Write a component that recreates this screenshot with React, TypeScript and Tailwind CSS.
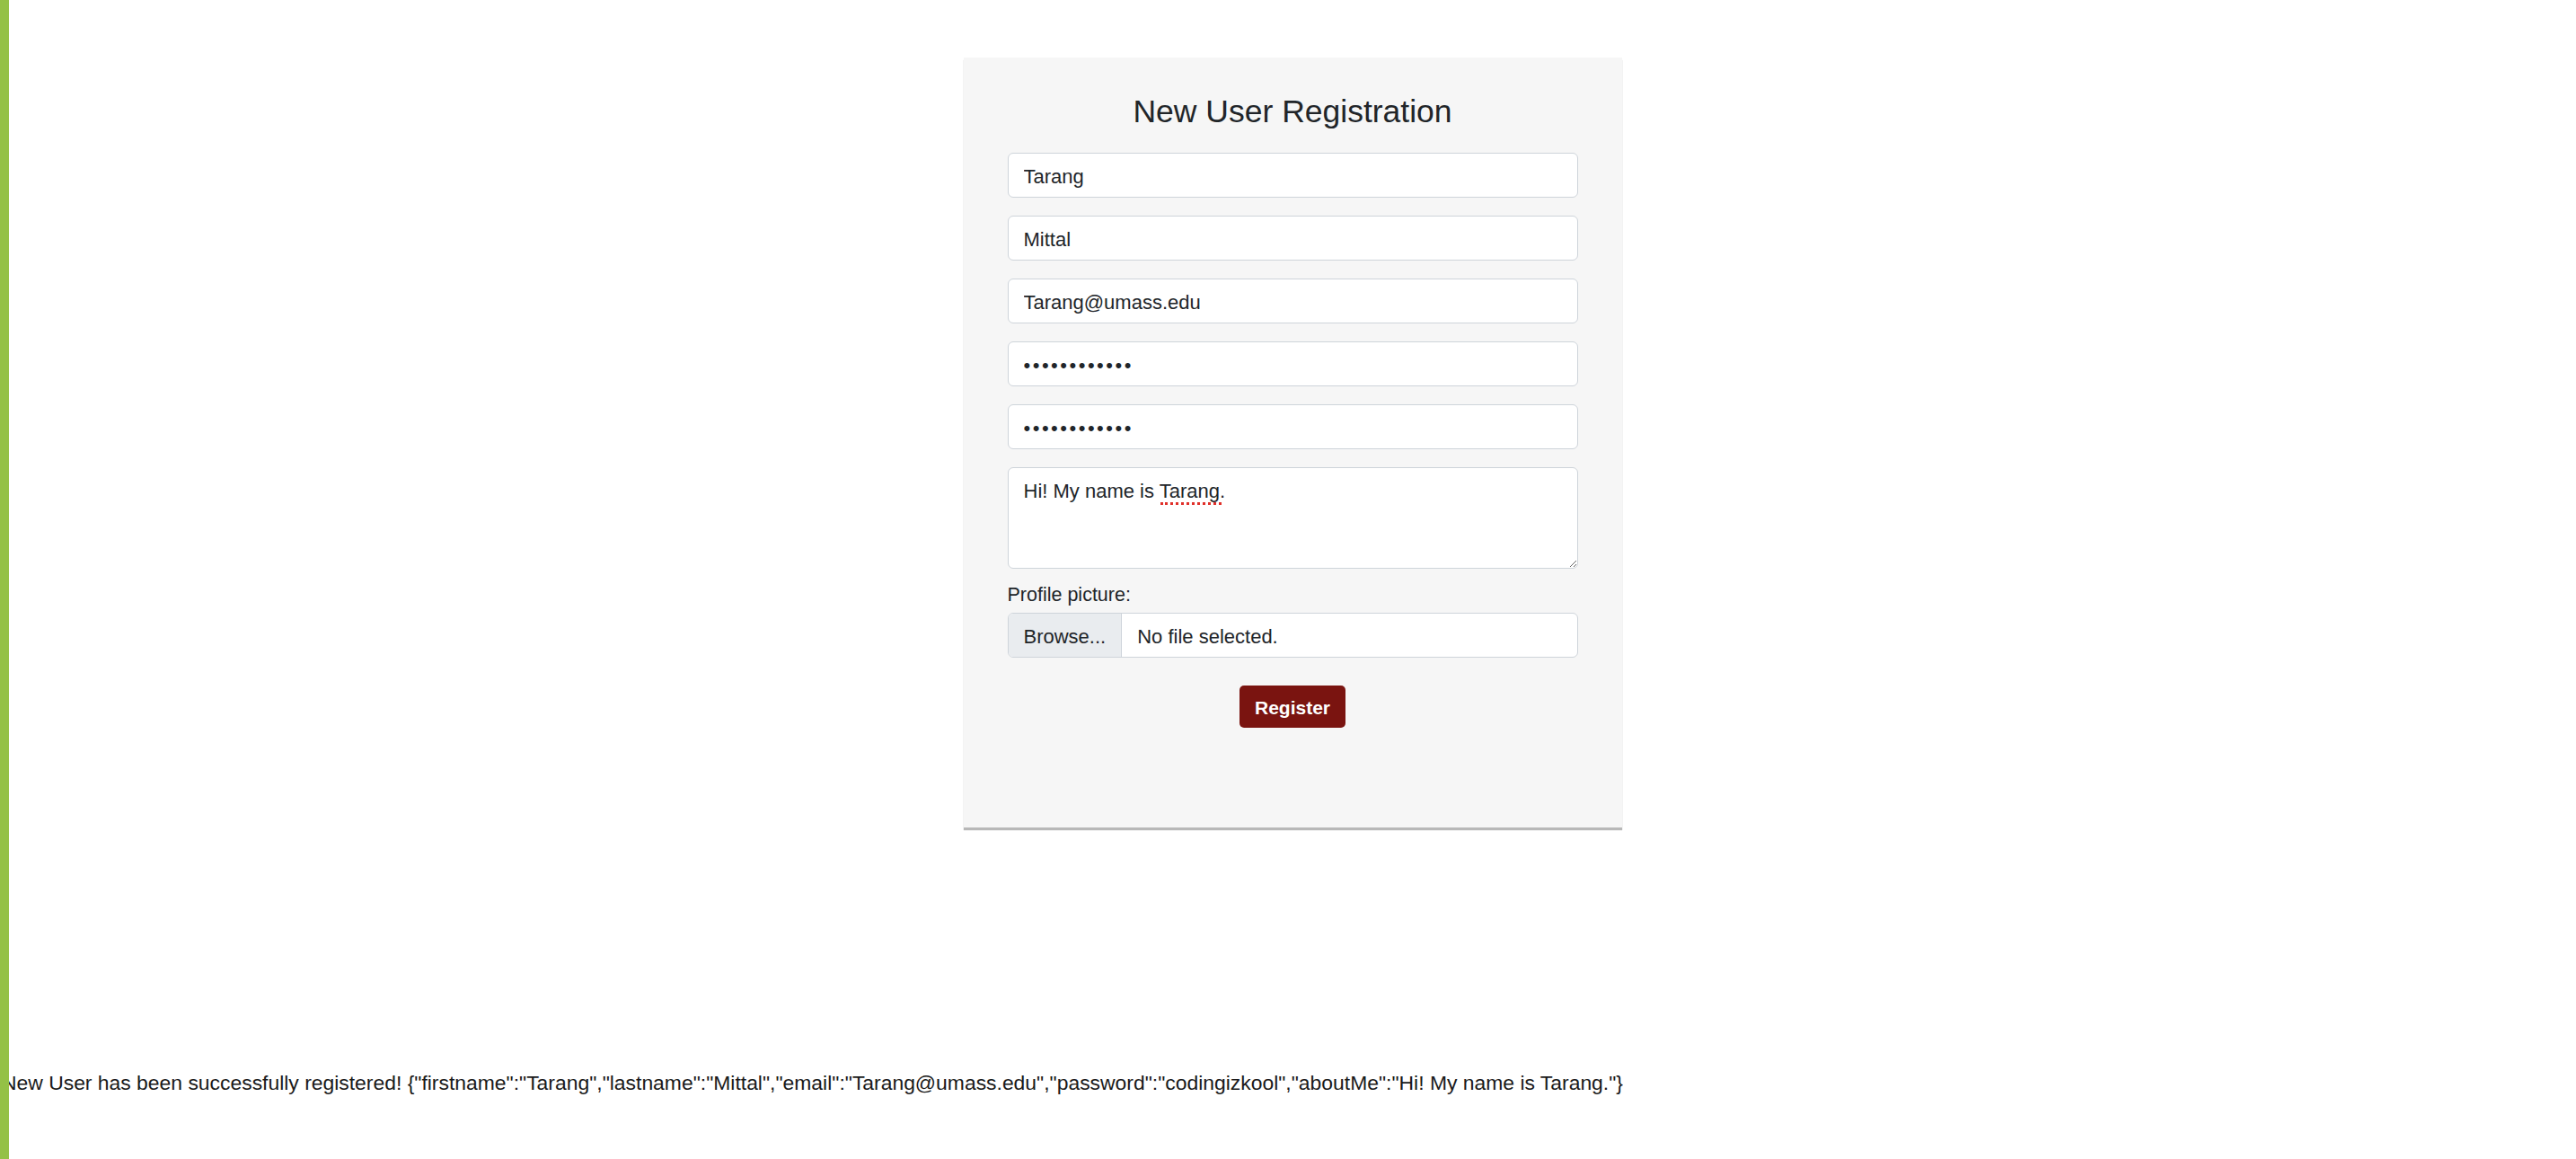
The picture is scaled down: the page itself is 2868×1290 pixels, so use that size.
import { useState } from 'react'

const font = { fontFamily: '"Liberation Sans", Arial, sans-serif' }

const inputCls =
  'block w-full h-[50px] mb-[20px] rounded-[6px] border border-[#ced4da] bg-white px-[17px] pt-[4px] text-[22px] text-[#212529] outline-none'

export default function App() {
  const [form] = useState({
    firstname: 'Tarang',
    lastname: 'Mittal',
    email: 'Tarang@umass.edu',
    password: 'codingizkool',
    aboutMe: 'Hi! My name is Tarang.',
  })

  return (
    <div className="relative min-h-screen bg-white text-[#212529]" style={font}>
      <div className="absolute left-0 top-0 z-10 h-full w-[10px] bg-[#94c146]" />

      <div className="flex justify-center pl-[10px] pt-[64px]">
        <div className="w-[733px] bg-[#f6f6f6] px-[49px] pt-[38px] pb-[111px] shadow-[0_3px_1px_rgba(0,0,0,0.28)]">
          <h1 className="mb-[24px] text-center text-[35.5px] leading-[44px] font-normal text-[#212529]">
            New User Registration
          </h1>
          <form onSubmit={e => e.preventDefault()}>
            <input className={inputCls} style={font} defaultValue={form.firstname} />
            <input className={inputCls} style={font} defaultValue={form.lastname} />
            <input className={inputCls} style={font} defaultValue={form.email} />
            <input className={`${inputCls} tracking-[2.5px]`} style={font} type="password" defaultValue={form.password} />
            <input className={`${inputCls} tracking-[2.5px]`} style={font} type="password" defaultValue={form.password} />
            <div className="relative">
              <textarea
                className="block w-full h-[113px] rounded-[6px] border border-[#ced4da] bg-white px-[17px] pt-[12px] pb-[8px] text-[22px] leading-[28px] text-[#212529] outline-none"
                style={font}
                spellCheck={false}
                defaultValue={form.aboutMe}
              />
              <span className="pointer-events-none absolute left-[170px] top-[39px] w-[68px] border-b-[3px] border-dotted border-[#e0302a]" />
            </div>
            <label className="mt-[17px] mb-[8px] block text-[21.5px] leading-[24px]">Profile picture:</label>
            <div className="flex h-[50px] w-full overflow-hidden rounded-[6px] border border-[#ced4da] bg-white pt-[3px] text-[22px]">
              <div className="-mt-[3px] flex items-center border-r border-[#ced4da] bg-[#e9ecef] px-[17px] pt-[3px]">Browse...</div>
              <div className="flex items-center px-[17px]">No file selected.</div>
            </div>
            <div className="mt-[31px] flex justify-center">
              <button className="h-[47px] w-[118px] rounded-[5px] bg-[#7a1410] pt-[2px] text-[21px] font-bold text-white">
                Register
              </button>
            </div>
          </form>
        </div>
      </div>

      <p className="mt-[270px] pl-[2px] text-[22.9px] leading-[28px] whitespace-nowrap text-[#1a1a1a]">
        New User has been successfully registered! {JSON.stringify(form)}
      </p>
    </div>
  )
}
